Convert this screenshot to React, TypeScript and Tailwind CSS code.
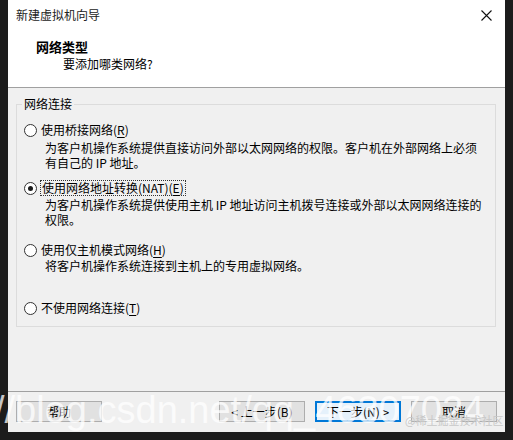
import React from "react";

const cjk = { fontFamily: '"Noto Sans CJK SC", "Microsoft YaHei", sans-serif' };

function Radio({ checked }: { checked?: boolean }) {
  return (
    <span className="flex h-[13px] w-[13px] shrink-0 items-center justify-center rounded-full border border-[#333] bg-white">
      {checked && <span className="h-[5px] w-[5px] rounded-full bg-[#1a1a1a]" />}
    </span>
  );
}

function Key({ k }: { k: string }) {
  return (
    <>
      (<span className="underline underline-offset-2">{k}</span>)
    </>
  );
}

export default function App() {
  return (
    <div className="relative flex h-[440px] w-[513px] overflow-hidden bg-[#1c1c1c] pl-[8px]" style={cjk}>
      <div className="flex h-[432px] w-[497px] flex-col bg-[#f0f0f0] text-[12px] text-black">
        {/* header */}
        <div className="h-[88px] border-b border-[#a0a0a0] bg-white">
          <div className="flex h-[30px] items-center justify-between pl-[8px] pr-[10px]">
            <span className="text-[#222]">新建虚拟机向导</span>
            <svg width="11" height="11" viewBox="0 0 11 11" className="mr-[3px]">
              <path d="M0.5 0.5 L10.5 10.5 M10.5 0.5 L0.5 10.5" stroke="#111" strokeWidth="1.1" />
            </svg>
          </div>
          <div className="pl-[28px] pt-[9px] text-[13px] font-bold leading-[16px]">网络类型</div>
          <div className="pl-[55px] pt-[1px] leading-[16px]">要添加哪类网络?</div>
        </div>

        {/* body */}
        <div className="flex-1 px-[8px] pt-[16px]">
          <div className="relative h-[223px] w-[480px] border border-[#dcdcdc] pl-[7px] pt-[17px]">
            <span className="absolute -top-[9px] left-[5px] bg-[#f0f0f0] px-[2px] leading-[16px]">网络连接</span>

            <div className="flex h-[16px] items-center gap-[4px]">
              <Radio />
              <span>使用桥接网络<Key k="R" /></span>
            </div>
            <div className="mt-[2px] pl-[21px] leading-[15px]">
              <div>为客户机操作系统提供直接访问外部以太网网络的权限。客户机在外部网络上必须</div>
              <div>有自己的 IP 地址。</div>
            </div>

            <div className="mt-[10px] flex h-[16px] items-center gap-[3px]">
              <Radio checked />
              <span className="border border-dotted border-[#333] px-[1px] leading-[14px]">
                使用网络地址转换(NAT)<Key k="E" />
              </span>
            </div>
            <div className="mt-[1px] pl-[21px] leading-[15px]">
              <div>为客户机操作系统提供使用主机 IP 地址访问主机拨号连接或外部以太网网络连接的</div>
              <div>权限。</div>
            </div>

            <div className="mt-[15px] flex h-[16px] items-center gap-[4px]">
              <Radio />
              <span>使用仅主机模式网络<Key k="H" /></span>
            </div>
            <div className="pl-[21px] leading-[15px]">
              <div>将客户机操作系统连接到主机上的专用虚拟网络。</div>
            </div>

            <div className="mt-[27px] flex h-[16px] items-center gap-[4px]">
              <Radio />
              <span>不使用网络连接<Key k="T" /></span>
            </div>
          </div>
        </div>

        {/* footer */}
        <div className="h-[41px] border-t border-[#a0a0a0]">
          <div className="flex items-center px-[8px] pt-[9px]">
            <button className="h-[21px] w-[86px] border border-[#adadad] bg-[#e1e1e1]">帮助</button>
            <div className="flex-1" />
            <button className="h-[21px] w-[86px] border border-[#adadad] bg-[#e1e1e1]">&lt; 上一步(B)</button>
            <button className="ml-[10px] h-[21px] w-[86px] border-2 border-[#0078d7] bg-[#e5f1fb]">下一步(N) &gt;</button>
            <button className="ml-[10px] h-[21px] w-[86px] border border-[#adadad] bg-[#e1e1e1]">取消</button>
          </div>
        </div>
      </div>

      {/* watermark */}
      <div
        className="pointer-events-none absolute left-[-6px] top-[388px] whitespace-nowrap text-[38px] leading-[44px] text-white/75"
        style={{ fontFamily: '"Liberation Sans", Arial, sans-serif' }}
      >
        //blog.csdn.net/qq_46307024
      </div>
      <div className="pointer-events-none absolute left-[405px] top-[412px] text-[11px] text-[#c8c8c8]">@稀土掘金技术社区</div>
    </div>
  );
}
